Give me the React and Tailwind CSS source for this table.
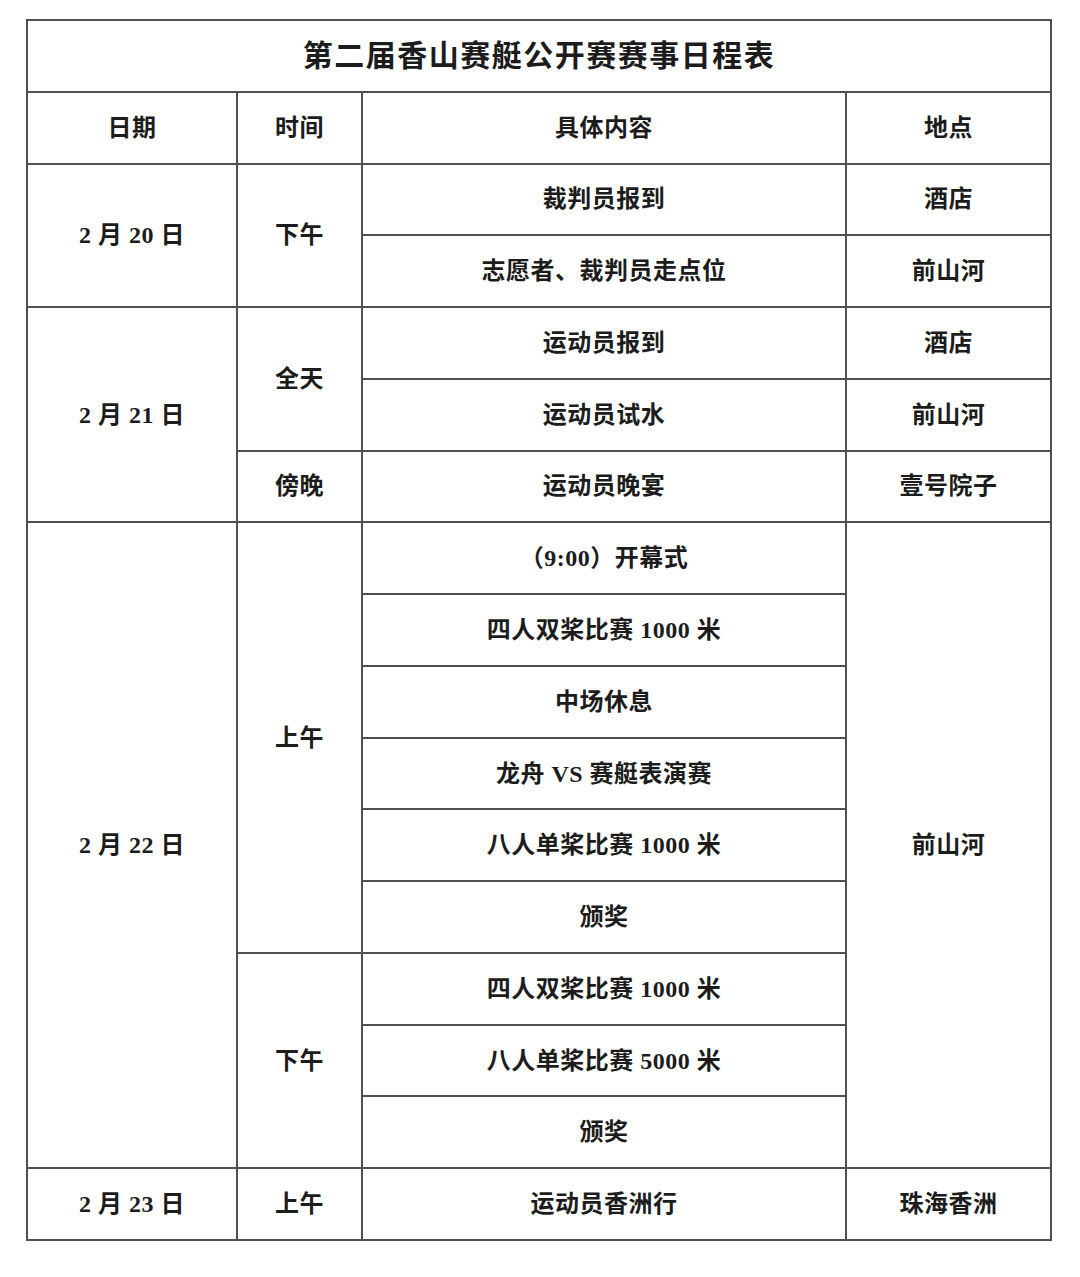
import React from 'react';

const font = { fontFamily: '"Liberation Serif", "Noto Sans CJK SC", serif' };

function Cell({ children, className = '' }) {
  return (
    <div className={`bg-white flex items-center justify-center text-[24px] font-bold tracking-[0.5px] text-[#1c1c1c] ${className}`}>
      {children}
    </div>
  );
}

export default function App() {
  return (
    <div className="w-[1080px] h-[1277px] bg-white pt-[19px] pl-[26px]" style={font}>
      <div className="w-[1026px] h-[1222px] bg-[#505050] p-[2px] grid gap-[2px] grid-cols-[208px_123px_482px_203px] grid-rows-[repeat(17,minmax(0,1fr))]">
        {/* Title */}
        <Cell className="col-span-4 text-[30px] tracking-[1.5px]">第二届香山赛艇公开赛赛事日程表</Cell>

        {/* Header */}
        <Cell>日期</Cell>
        <Cell>时间</Cell>
        <Cell>具体内容</Cell>
        <Cell>地点</Cell>

        {/* 2月20日 */}
        <Cell className="row-span-2">2 月 20 日</Cell>
        <Cell className="row-span-2">下午</Cell>
        <Cell>裁判员报到</Cell>
        <Cell>酒店</Cell>
        <Cell>志愿者、裁判员走点位</Cell>
        <Cell>前山河</Cell>

        {/* 2月21日 */}
        <Cell className="row-span-3">2 月 21 日</Cell>
        <Cell className="row-span-2">全天</Cell>
        <Cell>运动员报到</Cell>
        <Cell>酒店</Cell>
        <Cell>运动员试水</Cell>
        <Cell>前山河</Cell>
        <Cell>傍晚</Cell>
        <Cell>运动员晚宴</Cell>
        <Cell>壹号院子</Cell>

        {/* 2月22日 */}
        <Cell className="row-span-9">2 月 22 日</Cell>
        <Cell className="row-span-6">上午</Cell>
        <Cell>（9:00）开幕式</Cell>
        <Cell className="row-span-9">前山河</Cell>
        <Cell>四人双桨比赛 1000 米</Cell>
        <Cell>中场休息</Cell>
        <Cell>龙舟 VS 赛艇表演赛</Cell>
        <Cell>八人单桨比赛 1000 米</Cell>
        <Cell>颁奖</Cell>
        <Cell className="row-span-3">下午</Cell>
        <Cell>四人双桨比赛 1000 米</Cell>
        <Cell>八人单桨比赛 5000 米</Cell>
        <Cell>颁奖</Cell>

        {/* 2月23日 */}
        <Cell>2 月 23 日</Cell>
        <Cell>上午</Cell>
        <Cell>运动员香洲行</Cell>
        <Cell>珠海香洲</Cell>
      </div>
    </div>
  );
}
